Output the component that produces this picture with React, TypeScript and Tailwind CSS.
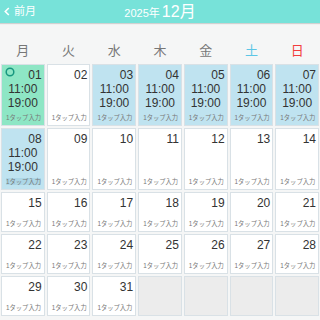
import React from "react";

type Cell = { day?: string; kind: "green" | "blue" | "white" | "empty"; time?: boolean; hl?: boolean };

const days: Cell[] = [];
for (let d = 1; d <= 31; d++) {
  const s = d < 10 ? "0" + d : String(d);
  if (d === 1) days.push({ day: s, kind: "green", time: true });
  else if (d >= 3 && d <= 8) days.push({ day: s, kind: "blue", time: true, hl: d === 8 });
  else days.push({ day: s, kind: "white" });
}
for (let i = 0; i < 4; i++) days.push({ kind: "empty" });

const weekdays = [
  { t: "月", c: "text-[#777777]" },
  { t: "火", c: "text-[#777777]" },
  { t: "水", c: "text-[#777777]" },
  { t: "木", c: "text-[#777777]" },
  { t: "金", c: "text-[#777777]" },
  { t: "土", c: "text-[#5cc6e6]" },
  { t: "日", c: "text-[#f23d3d]" },
];

const font = { fontFamily: '"Liberation Sans", "Noto Sans CJK JP", sans-serif' };

function DayCell({ c }: { c: Cell }) {
  if (c.kind === "empty") {
    return <div className="m-[1px] h-[40px] border border-[#d9e1e6] bg-[#ececec]" />;
  }
  const bg = c.kind === "green" ? "bg-[#8ee6c5]" : c.kind === "blue" ? "bg-[#bfe3f0]" : "bg-white";
  return (
    <div className={`relative m-[1px] flex flex-col border border-[#d9e1e6] ${bg} ${c.time ? "h-[62px]" : "min-h-[40px]"}`}>
      {c.kind === "green" && (
        <svg className="absolute left-[3px] top-[2px]" width="10" height="10" viewBox="0 0 10 10">
          <circle cx="5" cy="5" r="3.8" fill="none" stroke="#17977f" strokeWidth="1.5" />
        </svg>
      )}
      <div className="pt-[3px] pr-[2px] text-right text-[12px] leading-[14px] text-[#333333]">{c.day}</div>
      {c.time && (
        <div className="text-center text-[12px] leading-[14px] text-[#333333]">
          <div>11:00</div>
          <div>19:00</div>
        </div>
      )}
      <div className="mt-auto pb-[3px] pl-[4px] text-[6.3px] leading-[8px]">
        <span className={`text-[#777777] ${c.hl ? "bg-[#acd6e6]" : ""}`}>1タップ入力</span>
      </div>
    </div>
  );
}

export default function App() {
  return (
    <div className="h-[320px] w-[320px] overflow-hidden bg-[#f5f6f6]" style={font}>
      <div className="relative flex h-[23px] items-center bg-[#77e2d9] text-white shadow-[0_1px_1px_rgba(0,0,0,0.15)]">
        <div className="absolute left-[4px] top-0 flex h-[23px] items-center gap-[4px] text-[11px]">
          <svg width="6" height="9" viewBox="0 0 6 9">
            <polyline points="4.8,1 1.3,4.5 4.8,8" fill="none" stroke="white" strokeWidth="1.6" />
          </svg>
          <span>前月</span>
        </div>
        <div className="flex w-full items-baseline justify-center">
          <span className="text-[11px]">2025年</span>
          <span className="ml-[2px] text-[16px]">12月</span>
        </div>
      </div>
      <div className="grid h-[40px] grid-cols-7 items-end pb-[4px]">
        {weekdays.map((w) => (
          <div key={w.t} className={`text-center text-[13px] leading-[16px] ${w.c}`}>
            {w.t}
          </div>
        ))}
      </div>
      <div className="grid grid-cols-7">
        {days.map((c, i) => (
          <DayCell key={i} c={c} />
        ))}
      </div>
    </div>
  );
}
